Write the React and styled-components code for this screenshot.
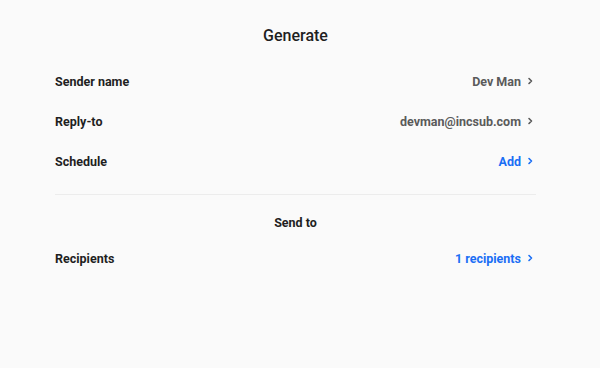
import React from 'react'
import styled, { createGlobalStyle } from 'styled-components'

const GlobalStyle = createGlobalStyle`
    body {
        margin: 0;
        background: #fafafa;
        font-family: Roboto, "Noto Sans", sans-serif;
        color: #1f1f1f;
    }
`

const Page = styled.div`
    width: 600px;
    height: 368px;
    box-sizing: border-box;
    padding: 24px 64px 0 55px;
`

const Title = styled.h1`
    margin: 0;
    height: 24px;
    line-height: 24px;
    text-align: center;
    font-size: 16px;
    font-weight: 500;
`

const Section = styled.div`
    display: flex;
    flex-direction: column;
    padding-top: ${p => p.$top || 0}px;
`

const Row = styled.div`
    display: flex;
    align-items: center;
    justify-content: space-between;
    height: 40px;
    font-size: 12.5px;
`

const Label = styled.span`
    font-weight: 700;
`

const Value = styled.span`
    display: flex;
    align-items: center;
    gap: 5px;
    font-weight: 700;
    color: ${p => (p.$accent ? '#1a6ef5' : '#5a5a5a')};
`

const Divider = styled.hr`
    margin: 13px 0 0;
    border: none;
    border-top: 1px solid #ececec;
`

const Subtitle = styled.div`
    height: 31px;
    line-height: 31px;
    margin-top: 12px;
    text-align: center;
    font-size: 12.5px;
    font-weight: 700;
`

const Chevron = ({ color }) => (
    <svg width="10" height="10" viewBox="0 0 10 10" fill="none">
        <path d="M3 2.5 L5.5 5 L3 7.5" stroke={color} strokeWidth="1.6" strokeLinecap="round" strokeLinejoin="round" />
    </svg>
)

export default function App() {
    return (
        <Page>
            <GlobalStyle />
            <Title>Generate</Title>
            <Section $top={13}>
                <Row>
                    <Label>Sender name</Label>
                    <Value>Dev Man <Chevron color="#5a5a5a" /></Value>
                </Row>
                <Row>
                    <Label>Reply-to</Label>
                    <Value>devman@incsub.com <Chevron color="#5a5a5a" /></Value>
                </Row>
                <Row>
                    <Label>Schedule</Label>
                    <Value $accent>Add <Chevron color="#1a6ef5" /></Value>
                </Row>
            </Section>
            <Divider />
            <Subtitle>Send to</Subtitle>
            <Row>
                <Label>Recipients</Label>
                <Value $accent>1 recipients <Chevron color="#1a6ef5" /></Value>
            </Row>
        </Page>
    )
}
